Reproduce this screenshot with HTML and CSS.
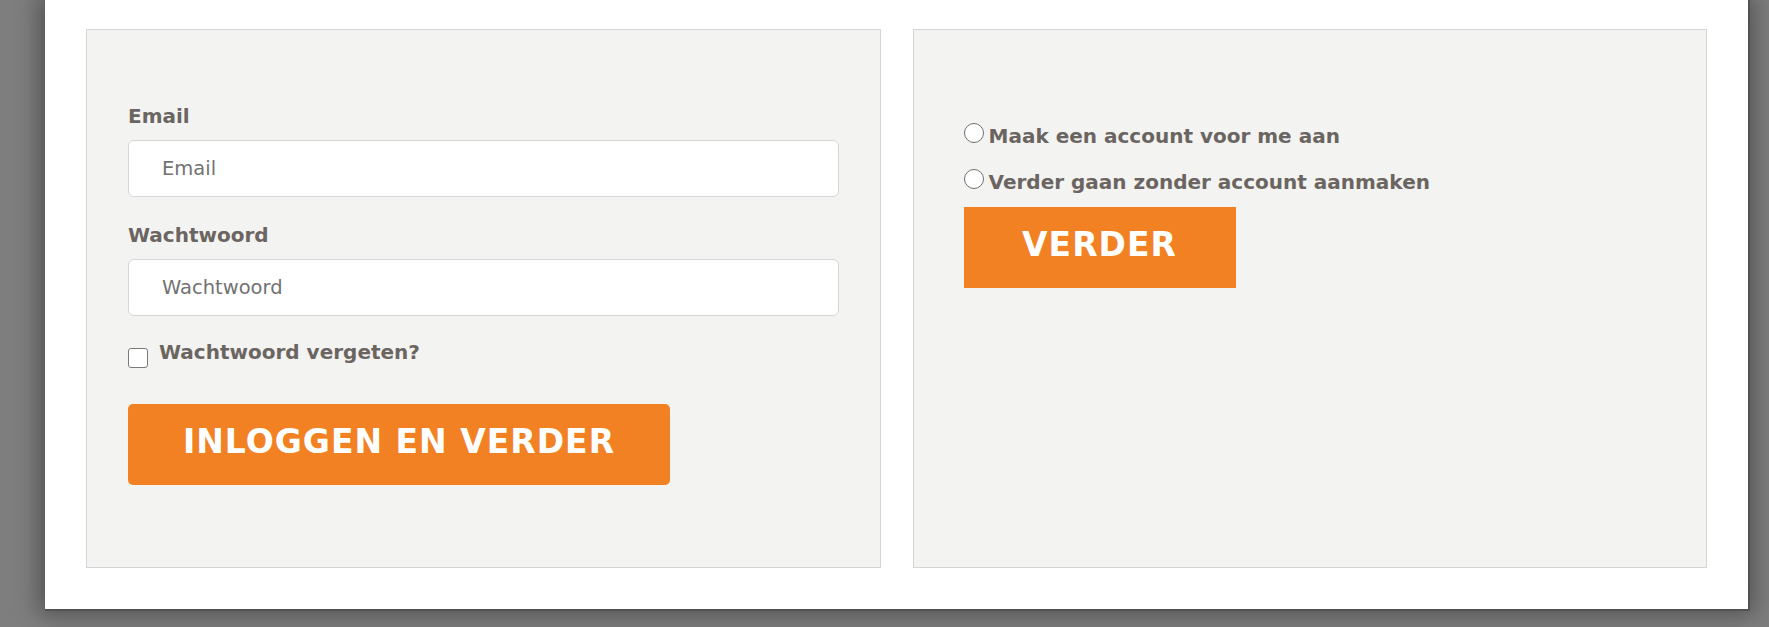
FILE: index.html
```html
<!DOCTYPE html>
<html lang="nl">
<head>
<meta charset="utf-8">
<title>Inloggen</title>
<link rel="stylesheet" href="styles.css">
</head>
<body>
<div class="sheet">
  <div class="columns">
    <form class="panel panel-login">
      <label class="field-label" for="email">Email</label>
      <input class="field" id="email" type="text" placeholder="Email">
      <label class="field-label field-label-second" for="pw">Wachtwoord</label>
      <input class="field" id="pw" type="password" placeholder="Wachtwoord">
      <div class="check-row">
        <input class="check" type="checkbox" id="forgot">
        <label class="check-text" for="forgot">Wachtwoord vergeten?</label>
      </div>
      <button type="button" class="btn btn-rounded">INLOGGEN EN VERDER</button>
    </form>
    <form class="panel panel-guest">
      <div class="radio-row">
        <input class="radio" type="radio" name="acc" id="r1">
        <label class="radio-text" for="r1">Maak een account voor me aan</label>
      </div>
      <div class="radio-row radio-row-second">
        <input class="radio" type="radio" name="acc" id="r2">
        <label class="radio-text" for="r2">Verder gaan zonder account aanmaken</label>
      </div>
      <button type="button" class="btn btn-square">VERDER</button>
    </form>
  </div>
</div>
</body>
</html>
```
FILE: styles.css
```css
html, body {
  margin: 0;
  padding: 0;
}
body {
  background: #7e7e7e;
  font-family: "DejaVu Sans", "Liberation Sans", sans-serif;
  color: #6b6561;
  overflow: hidden;
  height: 627px;
}
.sheet {
  box-sizing: border-box;
  margin-left: 45px;
  width: 1703px;
  background: #ffffff;
  padding: 29px 41px 41px 41px;
  box-shadow: 1px 1px 0 1px #525252, 0 0 22px 6px rgba(0, 0, 0, 0.35);
}
.columns {
  display: grid;
  grid-template-columns: 1fr 1fr;
  column-gap: 32px;
}
.panel {
  margin: 0;
  background: #f3f3f1;
  border: 1px solid #d5d5d5;
  display: flex;
  flex-direction: column;
  align-items: flex-start;
}
.panel-login {
  padding: 74px 41px 82px 41px;
}
.panel-guest {
  padding: 93px 41px 0 50px;
}
.field-label {
  font-size: 20px;
  line-height: 24px;
  font-weight: bold;
  display: block;
}
.field-label-second {
  margin-top: 26px;
}
.field {
  box-sizing: border-box;
  display: block;
  width: 100%;
  height: 57px;
  margin-top: 12px;
  border: 1px solid #d6d6d6;
  border-radius: 6px;
  background: #ffffff;
  padding: 0 0 0 33px;
  font-family: "DejaVu Sans", "Liberation Sans", sans-serif;
  font-size: 19.5px;
  color: #555;
  outline: none;
}
.field::placeholder {
  color: #727272;
  opacity: 1;
}
.check-row {
  display: flex;
  align-items: flex-start;
  margin-top: 24px;
}
.check {
  appearance: none;
  -webkit-appearance: none;
  box-sizing: border-box;
  width: 20px;
  height: 20px;
  margin: 8px 11px 0 0;
  border: 1px solid #7a7a7a;
  border-radius: 3px;
  background: #ffffff;
}
.check-text,
.radio-text {
  font-size: 20px;
  line-height: 24px;
  font-weight: bold;
}
.btn {
  border: none;
  background: #f28123;
  color: #ffffff;
  font-family: "DejaVu Sans", "Liberation Sans", sans-serif;
  font-weight: bold;
  font-size: 33px;
  letter-spacing: 1px;
  line-height: 76px;
  height: 81px;
  padding: 0 0 5px 0;
  text-align: center;
}
.btn-rounded {
  width: 542px;
  margin-top: 36px;
  border-radius: 5px;
}
.btn-square {
  width: 272px;
  margin-top: 13px;
  border-radius: 0;
}
.radio-row {
  display: flex;
  align-items: flex-start;
}
.radio-row-second {
  margin-top: 21px;
}
.radio {
  appearance: none;
  -webkit-appearance: none;
  box-sizing: border-box;
  width: 20px;
  height: 20px;
  margin: 0 5px 0 0;
  border: 1px solid #6f6f6f;
  border-radius: 50%;
  background: #ffffff;
}
.radio-text {
  margin-top: 1px;
}
```
